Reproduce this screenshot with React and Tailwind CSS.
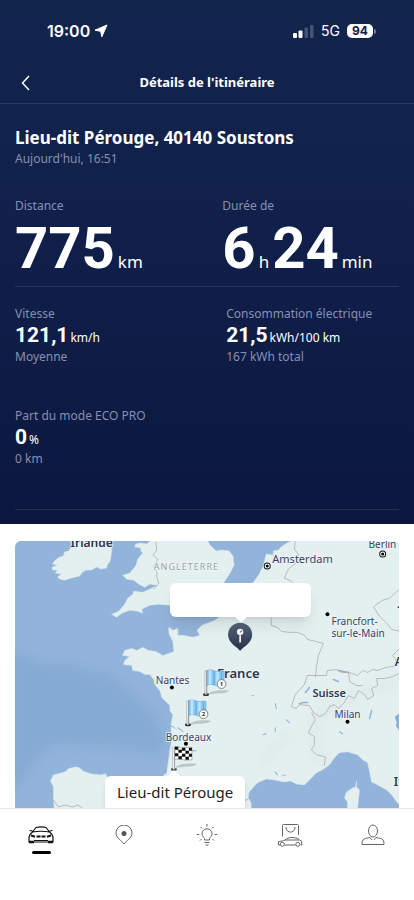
import { clsx } from 'clsx';

const StatusBar = () => (
  <div className="flex h-[62px] items-center justify-between pr-[38px] pl-[47px] font-['Inter','Liberation_Sans',sans-serif]">
    <div className="flex items-center gap-1">
      <span className="text-base font-semibold">19:00</span>
      <svg width="14" height="14" viewBox="0 0 14 14" aria-hidden="true">
        <path d="M13 1L7.800 12.800 6.700 7.300 1 6.200z" fill="#fff" stroke="#fff" strokeLinejoin="round" />
      </svg>
    </div>
    <div className="flex items-center">
      <svg width="21" height="14" viewBox="0 0 21 14" fill="#fff" aria-hidden="true">
        <rect x="0" y="9" width="4" height="5" rx="1" />
        <rect x="5.500" y="6.500" width="4" height="7.500" rx="1" />
        <rect x="11.500" y="3.500" width="3.500" height="10.500" rx="1" opacity=".22" />
        <rect x="17" y="1" width="3.500" height="13" rx="1" opacity=".22" />
      </svg>
      <span className="ml-[7px] text-sm">5G</span>
      <span className="ml-[7px] flex h-[14px] w-[26px] items-center justify-center rounded-[5px] bg-white text-xs font-bold text-[#11214a]">94</span>
      <span className="ml-px h-[5px] w-[2px] rounded-r-full bg-white/40" />
    </div>
  </div>
);

const BigNumber = ({ children }) => (
  <span className="font-['Roboto','Noto_Sans',sans-serif] text-[58px] leading-[60px] font-bold">{children}</span>
);

const Stat = ({ label, value, unit, note }) => (
  <div className="text-xs leading-[18px] text-[#8790b0]">
    <p>{label}</p>
    <p className="flex items-baseline gap-[2px] text-white">
      <span className="font-['Roboto','Noto_Sans',sans-serif] text-[21px] leading-[25px] font-bold">{value}</span>
      <span className="leading-4">{unit}</span>
    </p>
    <p>{note}</p>
  </div>
);

const Flag = ({ x, y, number }) => (
  <g transform={`translate(${x} ${y})`}>
    <path d="M3 25c5-3 9-4 21-3-3 4-10 2-20 4z" fill="#6d7b80" opacity=".35" />
    <ellipse cx="1" cy="26" rx="3" ry="1.500" fill="#333" />
    <path d="M1 2v24" stroke="#777" strokeWidth="2.400" />
    <path d="M.8 2v24" stroke="#f3f3f3" strokeWidth="1.200" />
    <path d="M2 2c4-2 7 1 10 1 3 0 4-1 7 0v14c-4-1-5 1-8 0-4-1-6-2-9 0z" fill="#8ccbf5" stroke="#6d9fc2" strokeWidth=".6" />
    <path d="M5 1.500v14.500M12.500 3.200v14" stroke="#bfe4ff" strokeWidth="2.400" />
    <path d="M9 2.500v14M16.500 3v13" stroke="#69b2e8" strokeWidth="1.600" />
    <circle cx="16.500" cy="15.500" r="4.400" fill="#fff" stroke="#555" strokeWidth=".7" />
    <text x="16.500" y="17.800" textAnchor="middle" fontSize="6" fontWeight="700" fill="#333">{number}</text>
  </g>
);

const FinishFlag = ({ x, y }) => (
  <g transform={`translate(${x} ${y})`}>
    <path d="M3 22c5-3 9-4 21-3-3 4-10 2-20 4z" fill="#6d7b80" opacity=".35" />
    <ellipse cx="1" cy="24.500" rx="3" ry="1.500" fill="#555" />
    <path d="M1 2v22.500" stroke="#888" strokeWidth="2.400" />
    <path d="M.8 2v22.500" stroke="#f3f3f3" strokeWidth="1.200" />
    <path d="M2 2c4-1 6 2 9 1s5 0 8 0v12c-4 0-5 1-8 0s-6-1-9 0z" fill="#fff" stroke="#777" strokeWidth=".5" />
    <path d="M2 2l3.500 0v3H2zM9 3h3.500v3H9zM16 3h3v3h-3zM5.500 5H9v3H5.500zM12.500 6H16v3h-3.500zM2 8.500h3.500v3H2zM9 9h3.500v3H9zM16 9h3v3h-3zM5.500 11.500H9v3H5.500zM12.500 12H16v3h-3.500z" fill="#111" />
  </g>
);

const cities = [
  { name: 'Amsterdam', x: 272, y: 564, size: 11, dot: [267, 567], capital: true },
  { name: 'Berlin', x: 368, y: 549, size: 10, dot: [382, 555], capital: true },
  { name: 'Nantes', x: 156, y: 684, size: 10, dot: [172, 688] },
  { name: 'Bordeaux', x: 166, y: 741, size: 10, dot: [186, 744] },
  { name: 'Milan', x: 334, y: 718, size: 10, dot: [347, 722] },
  { name: 'Francfort-', x: 331, y: 626, size: 10, dot: [327, 615] },
  { name: 'sur-le-Main', x: 331, y: 638, size: 10 },
];

const countries = [
  { name: 'Irlande', x: 71, y: 548, size: 12 },
  { name: 'France', x: 217, y: 678, size: 13 },
  { name: 'Suisse', x: 312, y: 697, size: 11 },
  { name: 'It', x: 393, y: 786, size: 12 },
  { name: 'A', x: 394, y: 667, size: 12 },
];

const MapDrawing = () => (
  <svg className="absolute inset-0 h-full w-full" viewBox="15 542 384 266" preserveAspectRatio="xMidYMid slice" role="img" aria-label="Carte">
    <defs>
      <linearGradient id="pin" x1="0" y1="0" x2="0" y2="1">
        <stop offset="0" stopColor="#56637a" />
        <stop offset="1" stopColor="#253047" />
      </linearGradient>
      <filter id="soft" x="-30%" y="-30%" width="160%" height="160%">
        <feGaussianBlur stdDeviation="6" />
      </filter>
    </defs>
    <rect x="15" y="542" width="384" height="266" fill="#93b4da" />
    <path d="M10 650L45 665 70 665 110 675 135 695 155 715 165 740 160 755 130 750 90 748 60 745 40 755 25 780 10 790z" fill="#82a9d2" opacity=".8" filter="url(#soft)" />

    {/* Land */}
    <g fill="#e4f0f0" stroke="#d6e6ea" strokeWidth=".5" strokeLinejoin="round">
      <path d="M71 541l1 7-3 4-4 1-1 4-4 1-5 4-2 3 5 1-5 2 0 3 5 0-2 3 6 1-4 3 3 2 4 1 10-3 5-1 3-4 4-2 5 0 5-3 4 2 6-1 1-4 2-2 1-3 1-8 0-12z" />
      <path d="M152 541l-5 4-6-1-5 1-1 3 6 1 0 3 2 2-5 6-2 7-6 7-7 2 4 4 7 1 5 4 6 3 5-3 8 1-6 3-9 4-9-1-1 3-5 4-3 6-6 7-7 3 5 3 5-4 8-3 8 1 5 2-1-4 8-4 9-1 10 1 20-1 20-6 15-16 6-9 4-8-1-9-4-5-7-1-6 1-6-6-4-7-1-3z" />
      <path d="M293 541l-6 3-5 3-4 4-5 1 0 4-7-1-3 12-4 8-5 7-5 5-10 14-19 16-5 4-13 5-5 5 3 5-7 2-10-2-5 0 0-7-5 2-4-3 0 6 4 8 1 10-5 2-6 2-7-4-7-1-6-3-6 3-5-2-7 2-2 5 7 1-5 4-1 4 8 1 1 5 7 1 5 3 5 0 4 5 1 5 5 6 2 7 8 8 0 5 3 4-2 10 7 5-7-3 1 13-2 10-3 23-7 6-25 1-13-1-14-1-2-4-5 1-10-1-8-3-3-3-4-1-7 2-3 3-12 3-3 6 3 6 0 10 1 16H251l0-10-3-5 1-6 8-9 9-4 8 1 10 2 6-1 6 3 8 1 7-7 5-5 6-3 7-5 5-7 5-5 8-1 10 3 5 5 5 3 2 9 2 10 6 3 9 5 5 5 5 7 5 5V541z" />
      <path d="M356 781l0 6 3 3-1 8-1 11h-10l0-7-3-4 2-6 6-4 3-1z" />
    </g>
    <path d="M400 713l-6 4 2 6-1 3 3 4 2 9z" fill="#8cafd7" />

    {/* Relief */}
    <g fill="none" stroke="#cfdedb" strokeWidth="7" opacity=".4" strokeLinecap="round" strokeLinejoin="round" filter="url(#soft)">
      <path d="M320 762l-5-20-3-20 14-12 18-8 20-10 32-10" />
      <path d="M262 764l12-16 16-10M120 795l50-3 70 8" />
    </g>

    {/* Lakes and rivers */}
    <g fill="none" stroke="#8fb0da" strokeWidth="1.500" strokeLinecap="round">
      <path d="M299 704l4-1 4 0M305 693l4-5M338 671l10 2M333 680l5 2M369 719l2-8" />
      <path d="M276 709l-1-5M286 720l3 3M339 732l3 2M192 751l4 0M263 735l3-1M252 696l1 0M178 728l5 4M275 732v-4M275 772l2 3M282 776l3-1" strokeWidth="1" />
    </g>

    {/* Borders */}
    <g fill="none" stroke="#b0adb2" strokeWidth=".8" strokeLinejoin="round">
      <path d="M156 543l1 8-4 5 5 4-4 8 3 5 0 5 2 6-5 6" />
      <path d="M295 542l-1 8 4 5-1 8-9 7-4 9 7 3 4 5M271 618l0 8 6 2 4 4 8 1 8 0 7 3 3 4 8 2 8 2-5 12-2 12-1 10" />
      <path d="M399 590l-5 4-5 5-7 2-6 4-3 3 6 9 7 7 5 6 8 2M399 649l-7 7 4 6-3 5-8 1-8 3-5-1-5 3-5-2-5 5-8-3-8 0-5-3-9 1-1 5-19 0-3 9-9 10-4 12 5 2 3-4 10 1 4 7 6 4 6-3 4-7 5-2 4 4 5-5 5-8 6 3 4-8 6 4 3 5 6-4-2-7 6-3-1-7 8 0 8-2 8-4 6 4M348 672l1 10 7 4 6 0" />
      <path d="M311 713l4 7-3 5-4 8 6 4 0 8-3 5 5 5 9 2-1 9" />
      <path d="M44 804l4-5 6 1 5 7 7-2 7 2 5-2 5 3M240 803l8-4" />
    </g>
    <path d="M397 608h3" stroke="#2f3550" strokeWidth="1.500" />

    <g fontFamily="'Noto Sans', sans-serif" stroke="#edf5f5" strokeWidth="1.500" paintOrder="stroke" strokeLinejoin="round">
      <text x="154" y="571" fontSize="9" letterSpacing="1" fill="#9ba3a9">ANGLETERRE</text>
      {countries.map(c => (
        <text key={c.name} x={c.x} y={c.y} fontSize={c.size} fontWeight="600" fill="#2f3550">{c.name}</text>
      ))}
      {cities.map(c => (
        <text key={c.name} x={c.x} y={c.y} fontSize={c.size} fill="#3a3f66">{c.name}</text>
      ))}
    </g>
    {cities.filter(c => c.dot).map(c => (
      <g key={c.name}>
        {c.capital && <circle cx={c.dot[0]} cy={c.dot[1]} r="3" fill="#fff" stroke="#111" />}
        <circle cx={c.dot[0]} cy={c.dot[1]} r={c.capital ? 1.5 : 2} />
      </g>
    ))}

    <Flag x={205} y={669} number="1" />
    <Flag x={187} y={699} number="2" />
    <FinishFlag x={173} y={745} />

    {/* Current place pin */}
    <path d="M240 651.500c-3-4-12-7.500-12-16a12 12 0 0 1 24 0c0 8.500-9 12-12 16z" fill="url(#pin)" />
    <circle cx="240" cy="632.500" r="3.200" fill="#fff" />
    <path d="M240 633l2-2" stroke="#56637a" />
    <path d="M240 636v7" stroke="#fff" strokeWidth="1.600" />
  </svg>
);

const CarIcon = () => (
  <svg width="26" height="18" viewBox="0 0 26 18" fill="none" stroke="#111" strokeWidth="1.200" strokeLinejoin="round">
    <path d="M4.500 6L8 1.500C11 .8 15 .8 18 1.500L21.500 6C16 5 10 5 4.500 6zM4.500 6L2 8.500 1 11v5h24v-5l-1-2.500L21.500 6M1.500 4.500l3 .5M24.500 4.500l-3 .5M6 14.500h14" />
    <path d="M3 9.500l4 1.200M23 9.500l-4 1.200M8.500 10.500h4M13.500 10.500h4" strokeWidth="2" />
    <path d="M1 16h5M20 16h5" strokeWidth="2.600" />
  </svg>
);

const PinIcon = () => (
  <svg width="18" height="20" viewBox="0 0 18 20" fill="none" stroke="#666">
    <path d="M9 19c-2-3-8-6-8-11a8 8 0 0 1 16 0c0 5-6 8-8 11z" />
    <circle cx="9" cy="8.500" r="2.500" fill="#555" stroke="none" />
  </svg>
);

const BulbIcon = () => (
  <svg width="22" height="22" viewBox="0 0 22 22" fill="none" stroke="#666">
    <path d="M8.500 16v-1.500C7.500 13 6 12 6 9.800a5 5 0 0 1 10 0c0 2.200-1.500 3.200-2.500 4.700V16zM8.500 18.500h5M9.500 21h3M11 0v2.500M4.500 3l1.500 1.500M17.500 3L16 4.500M.8 10.500h2.500M18.700 10.500h2.500M4 16.500L5.500 15M18 16.500L16.500 15" />
  </svg>
);

const StoreIcon = () => (
  <svg width="26" height="24" viewBox="0 0 26 24" fill="none" stroke="#666" strokeLinejoin="round">
    <path d="M5.500 13.500V2.500a1 1 0 0 1 1-1h14a1 1 0 0 1 1 1V12" />
    <path d="M9 4v1c1 5.500 8 5.500 9 0V4" />
    <path d="M3 22H1.500v-3.200c3-.8 4.500-.8 6.500-1.800 2-1.800 4-2.500 7-2.500 4 0 6 1 8 2.800l1.500.7.5 4h-1.500M7.500 22h11M8 17h14" />
    <circle cx="5.300" cy="21.300" r="2" />
    <circle cx="20.800" cy="21.300" r="2" />
  </svg>
);

const ProfileIcon = () => (
  <svg width="24" height="22" viewBox="0 0 24 22" fill="none" stroke="#666" strokeLinejoin="round">
    <ellipse cx="12" cy="7" rx="4.500" ry="6" />
    <path d="M9 13.500c-1.500.5-4 .5-6 1.500-1.500 1-2 2.500-2 5.500h22c0-3-.500-4.500-2-5.500-2-1-4.500-1-6-1.500M9 13.500l2 2.500M15 13.500L13 16" />
  </svg>
);

const tabs = [
  { label: 'Véhicule', icon: CarIcon, active: true },
  { label: 'Carte', icon: PinIcon },
  { label: 'Découvrir', icon: BulbIcon },
  { label: 'Boutique', icon: StoreIcon },
  { label: 'Profil', icon: ProfileIcon },
];

const TabBar = () => (
  <nav className="grid h-[92px] grid-cols-5 border-t border-gray-200 bg-white pt-[14px]">
    {tabs.map(({ label, icon: Icon, active }) => (
      <button key={label} type="button" aria-label={label} className="flex flex-col items-center self-start">
        <span className="flex h-6 items-center">
          <Icon />
        </span>
        <span className={clsx('mt-1 h-[3px] w-[19px] rounded-full', active && 'bg-black')} />
      </button>
    ))}
  </nav>
);

const App = () => {
  return (
    <div className="flex min-h-screen flex-col bg-white font-['Noto_Sans','Open_Sans',sans-serif]">
      <header className="bg-linear-to-b from-[#12254d] via-[#101f4a] to-[#0b173e] text-white">
        <StatusBar />
        <div className="grid h-[42px] grid-cols-[50px_1fr_50px] items-center border-b border-white/10">
          <button type="button" aria-label="Retour" className="flex h-full items-center pl-[21px]">
            <svg width="9" height="16" viewBox="0 0 9 16" fill="none" stroke="#fff" strokeWidth="1.500">
              <path d="M8 1L1.500 8 8 15" />
            </svg>
          </button>
          <h1 className="text-center text-[13px] font-bold">Détails de l'itinéraire</h1>
        </div>

        <div className="px-[15px] pb-[14px]">
          <h2 className="pt-[22px] text-[17px] leading-6 font-bold">Lieu-dit Pérouge, 40140 Soustons</h2>
          <p className="text-xs leading-[18px] text-[#8790b0]">Aujourd'hui, 16:51</p>

          <div className="mt-[29px] grid grid-cols-[54fr_46fr] border-b border-white/10 pb-[8px]">
            <div>
              <p className="text-xs leading-[18px] text-[#8790b0]">Distance</p>
              <p className="flex items-baseline gap-[3px] pt-[3px] text-[17px] leading-5">
                <BigNumber>775</BigNumber>
                <span>km</span>
              </p>
            </div>
            <div>
              <p className="text-xs leading-[18px] text-[#8790b0]">Durée de</p>
              <p className="flex items-baseline gap-[3px] pt-[3px] text-[17px] leading-5">
                <BigNumber>6</BigNumber>
                <span>h</span>
                <BigNumber>24</BigNumber>
                <span>min</span>
              </p>
            </div>
          </div>

          <div className="grid grid-cols-[55fr_45fr] gap-y-[41px] border-b border-white/10 pt-[18px] pb-[41px]">
            <Stat label="Vitesse" value="121,1" unit="km/h" note="Moyenne" />
            <Stat label="Consommation électrique" value="21,5" unit="kWh/100 km" note="167 kWh total" />
            <Stat label="Part du mode ECO PRO" value="0" unit="%" note="0 km" />
          </div>
        </div>
      </header>

      <main className="flex flex-1 flex-col px-[15px] pt-[17px]">
        <div className="relative min-h-[264px] flex-1 overflow-hidden rounded-t-md">
          <MapDrawing />
          <div className="absolute top-[42px] left-[155px] h-[34px] w-[141px] rounded-md bg-white shadow-lg">
            <span className="absolute -bottom-1 left-1/2 size-2 -translate-x-1/2 rotate-45 bg-white" />
          </div>
          <div className="absolute -bottom-1 left-[90px] rounded-md bg-white px-3 pt-1 pb-2 text-[15px] leading-6 text-[#222] shadow-md">
            <span className="absolute -top-1 left-[65px] size-2 rotate-45 bg-white" />
            Lieu-dit Pérouge
          </div>
        </div>
      </main>

      <TabBar />
    </div>
  );
};

export default App;
